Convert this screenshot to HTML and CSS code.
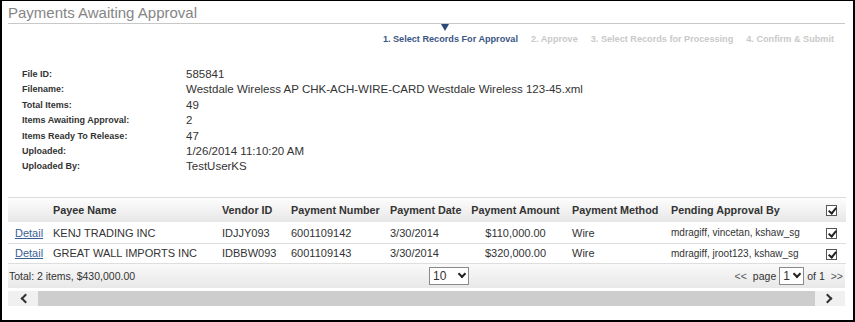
FILE: index.html
```html
<!DOCTYPE html>
<html>
<head>
<meta charset="utf-8">
<link rel="stylesheet" href="styles.css">
</head>
<body>
<div class="frame">
  <div class="title">Payments Awaiting Approval</div>
  <div class="steps">
    <span class="step active">1. Select Records For Approval<span class="marker"></span></span>
    <span class="step">2. Approve</span>
    <span class="step">3. Select Records for Processing</span>
    <span class="step">4. Confirm &amp; Submit</span>
  </div>
  <div class="info">
    <div class="lbl">File ID:</div><div class="val">585841</div>
    <div class="lbl">Filename:</div><div class="val">Westdale Wireless AP CHK-ACH-WIRE-CARD Westdale Wireless 123-45.xml</div>
    <div class="lbl">Total Items:</div><div class="val">49</div>
    <div class="lbl">Items Awaiting Approval:</div><div class="val">2</div>
    <div class="lbl">Items Ready To Release:</div><div class="val">47</div>
    <div class="lbl">Uploaded:</div><div class="val">1/26/2014 11:10:20 AM</div>
    <div class="lbl">Uploaded By:</div><div class="val">TestUserKS</div>
  </div>
  <div class="grid">
    <table>
      <colgroup>
        <col class="c-det"><col class="c-payee"><col class="c-vend"><col class="c-num"><col class="c-date"><col class="c-amt"><col class="c-meth"><col class="c-pend"><col class="c-chk">
      </colgroup>
      <thead>
        <tr>
          <th></th>
          <th>Payee Name</th>
          <th>Vendor ID</th>
          <th>Payment Number</th>
          <th>Payment Date</th>
          <th class="amt">Payment Amount</th>
          <th>Payment Method</th>
          <th>Pending Approval By</th>
          <th><span class="cb"></span></th>
        </tr>
      </thead>
      <tbody>
        <tr>
          <td><a href="#">Detail</a></td>
          <td>KENJ TRADING INC</td>
          <td>IDJJY093</td>
          <td>6001109142</td>
          <td>3/30/2014</td>
          <td class="amt">$110,000.00</td>
          <td>Wire</td>
          <td class="pend">mdragiff, vincetan, kshaw_sg</td>
          <td><span class="cb"></span></td>
        </tr>
        <tr>
          <td><a href="#">Detail</a></td>
          <td>GREAT WALL IMPORTS INC</td>
          <td>IDBBW093</td>
          <td>6001109143</td>
          <td>3/30/2014</td>
          <td class="amt">$320,000.00</td>
          <td>Wire</td>
          <td class="pend">mdragiff, jroot123, kshaw_sg</td>
          <td><span class="cb"></span></td>
        </tr>
      </tbody>
    </table>
    <div class="footer">
      <div class="total">Total: 2 items, $430,000.00</div>
      <div class="size"><span class="sel w40">10<span class="chev"></span></span></div>
      <div class="pager"><span class="nav">&lt;&lt;</span><span>page</span><span class="sel w24">1<span class="chev"></span></span><span>of 1</span><span class="nav">&gt;&gt;</span></div>
    </div>
    <div class="hscroll">
      <span class="arrow left"></span>
      <span class="thumb"></span>
      <span class="arrow right"></span>
    </div>
  </div>
</div>
</body>
</html>
```
FILE: styles.css
```css
* { box-sizing: border-box; }
html, body { margin: 0; padding: 0; background: #fff; }
body { font-family: Arial, "Liberation Sans", sans-serif; color: #333; }
.frame {
  width: 855px; height: 322px;
  border: 1px solid #000;
  border-left-width: 2px; border-right-width: 2px; border-bottom-width: 2px;
  padding: 3px 8px 0 6px;
}
.title {
  font-size: 15px; color: #858585; line-height: 18px;
  border-bottom: 1px solid #c8c8c8;
  padding-bottom: 1px;
}
.steps {
  display: flex; justify-content: flex-end; gap: 13px;
  padding: 10px 11px 0 0;
  font-size: 9.15px; font-weight: bold; color: #c9c9c9;
  line-height: 11px;
}
.step { position: relative; }
.step.active { color: #3a5683; }
.marker {
  position: absolute; left: 58px; top: -10px;
  width: 0; height: 0;
  border-left: 4.5px solid transparent; border-right: 4.5px solid transparent;
  border-top: 7px solid #2b4a77;
}
.info {
  display: grid; grid-template-columns: 164px 1fr;
  padding: 22px 0 0 14px;
}
.lbl { font-size: 9px; font-weight: bold; color: #333; line-height: 15.4px; }
.val { font-size: 11.5px; color: #333; line-height: 15.4px; }
.grid { margin-top: 22px; }
table { width: 100%; border-collapse: collapse; table-layout: fixed; font-size: 11px; }
thead tr { background: linear-gradient(#fdfdfd, #e7e7e7); border-top: 1px solid #dcdcdc; }
th { font-size: 10.8px; font-weight: bold; text-align: left; height: 25px; padding: 0 0 0 7px; color: #333; white-space: nowrap; }
td { height: 21px; padding: 0 0 0 7px; border-bottom: 1px solid #dedede; white-space: nowrap; color: #333; }
tbody tr:last-child td { height: 20px; }
td a { color: #3a5f93; text-decoration: underline; }
.c-det { width: 38px; }
.c-payee { width: 169px; }
.c-vend { width: 69px; }
.c-num { width: 99px; }
.c-date { width: 83px; }
.c-amt { width: 99px; }
.c-meth { width: 99px; }
.c-pend { width: 155px; }
.c-chk { width: 27px; }
th.amt, td.amt { text-align: center; padding-left: 0; }
td.pend { font-size: 10px; }
.cb {
  display: inline-block; width: 11px; height: 11px; border: 1px solid #555; background: #fff;
  position: relative; vertical-align: middle;
}
.cb::after {
  content: ""; position: absolute; left: 3px; top: 0px; width: 3px; height: 6px;
  border: solid #222; border-width: 0 2px 2px 0; transform: rotate(40deg);
}
.footer {
  display: flex; align-items: center; height: 24px;
  background: linear-gradient(#f9f9f9, #e8e8e8);
  font-size: 10.5px; color: #333; padding: 0 0 0 1px;
}
.total { width: 420px; }
.size { flex: 1; }
.pager { display: flex; align-items: center; gap: 3px; margin-right: -1px; }
.nav { color: #555; margin: 0 3px; }
.sel {
  display: inline-flex; align-items: center; justify-content: space-between;
  height: 18px; border: 1px solid #8a8a8a; background: #fff; padding: 0 3px 0 3px;
  font-size: 12px;
}
.w40 { width: 40px; }
.w24 { width: 25px; }
.chev {
  width: 6px; height: 6px; border: solid #222; border-width: 0 2px 2px 0; transform: rotate(45deg); margin-top: -4px;
}
.hscroll {
  display: flex; height: 15px; margin-top: 3px; background: #f0f0f0; align-items: center;
}
.thumb { flex: 1; height: 15px; background: #cdcdcd; }
.arrow { width: 30px; height: 15px; position: relative; }
.arrow::after {
  content: ""; position: absolute; top: 4px; width: 5px; height: 5px; border: solid #333; border-width: 0 2px 2px 0;
}
.arrow.left::after { left: 14px; transform: rotate(135deg); }
.arrow.right::after { left: 9px; transform: rotate(-45deg); }
```
